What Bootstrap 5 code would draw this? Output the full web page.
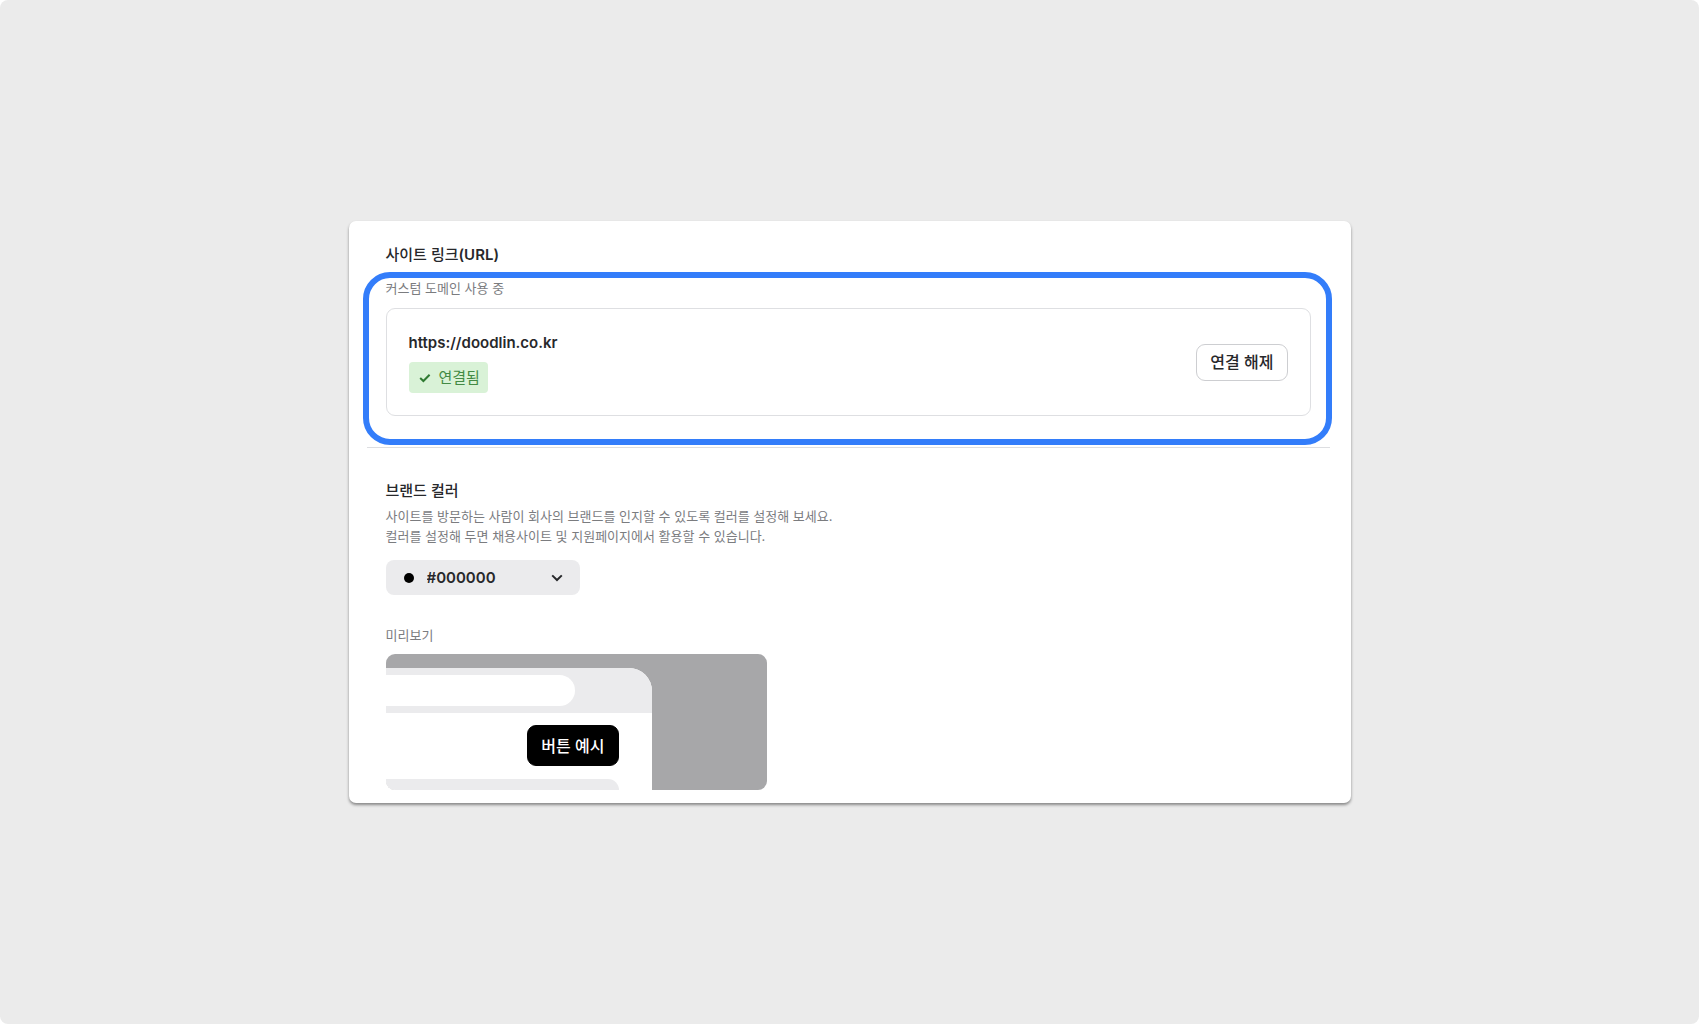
<!DOCTYPE html>
<html lang="ko">
<head>
<meta charset="utf-8">
<meta name="viewport" content="width=device-width, initial-scale=1">
<title>사이트 설정</title>
<link href="https://cdn.jsdelivr.net/npm/bootstrap@5.3.0/dist/css/bootstrap.min.css" rel="stylesheet">
<style>
  html { background: #fff; }
  body {
    background: #fff;
    color: #27282b;
    font-family: Inter, "Noto Sans CJK KR", sans-serif;
    font-size: 15px;
    line-height: 20px;
  }
  .stage { background: #ebebeb; border-radius: 8px; }
  .panel {
    max-width: 1002px;
    padding: 24px 0 13px;
    border-radius: 7px;
    box-shadow: 0 2px 3px rgba(0, 0, 0, .42);
  }
  .block { padding: 0 37px; }
  .heading { font-size: 15px; font-weight: 500; line-height: 20px; margin: 0; }
  .note { font-size: 13px; line-height: 20px; color: #7b7c7f; margin: 0; }
  .heading + .note { margin-top: 5px; }
  .highlight {
    margin: 7px 19px 2px 14px;
    padding: 0 15px 23px 17px;
    border: 6px solid #337dfa;
    border-radius: 27px;
  }
  .domain-box {
    margin-top: 10px;
    padding: 22px;
    border: 1px solid #dedfe2;
    border-radius: 9px;
  }
  .domain-info { gap: 9px; padding-top: 2px; }
  .domain-url { font-weight: 600; color: #27282b; }
  .status {
    height: 31px;
    padding: 0 8px 0 10px;
    gap: 8px;
    border-radius: 4px;
    background: #d9f2d7;
    color: #438a44;
  }
  .btn-line {
    --bs-btn-color: #27282b;
    --bs-btn-border-color: #cdced1;
    --bs-btn-border-radius: 9px;
    --bs-btn-padding-x: 13px;
    --bs-btn-padding-y: 0px;
    --bs-btn-font-size: 16px;
    --bs-btn-font-weight: 500;
    height: 37px;
    white-space: nowrap;
  }
  .rule { height: 1px; margin: 0 21px 33px 18px; background: #dddee1; opacity: 1; border: 0; }
  .color-pick { width: 194px; margin-top: 14px; }
  .color-pick select {
    height: 35px;
    padding: 0 41px;
    border: 0;
    border-radius: 8px;
    background: #ebebed;
    color: #27282b;
    font-size: 15px;
    font-weight: 600;
    appearance: none;
  }
  .color-pick .dot { left: 18px; width: 10px; height: 10px; background: #000; }
  .color-pick svg { right: 17px; }
  .preview-label { margin-top: 30px; }
  .preview { max-width: 381px; height: 136px; margin-top: 9px; padding-top: 14px; background: #a7a7a9; border-radius: 9px; }
  .device { width: 266px; height: 122px; background: #fff; border-radius: 0 23px 0 0; }
  .device-bar { height: 45px; padding: 7px 0; background: #ebebed; }
  .device-pill { width: 189px; height: 31px; background: #fff; border-radius: 0 16px 16px 0; }
  .btn-sample {
    --bs-btn-color: #fff;
    --bs-btn-bg: #000;
    --bs-btn-border-color: #000;
    --bs-btn-border-radius: 9px;
    --bs-btn-padding-x: 13px;
    --bs-btn-padding-y: 0px;
    --bs-btn-font-size: 16px;
    --bs-btn-font-weight: 500;
    height: 41px;
    margin: 12px 33px 13px auto;
  }
  .device-foot { width: 233px; height: 11px; background: #ebebed; border-radius: 0 12px 0 9px; }
</style>
</head>
<body>
<main class="stage min-vh-100 d-flex align-items-center justify-content-center">
  <div class="panel bg-white w-100">
    <section>
      <div class="block"><h2 class="heading">사이트 링크<span class="fw-semibold">(URL)</span></h2></div>
      <div class="highlight">
        <p class="note">커스텀 도메인 사용 중</p>
        <div class="domain-box d-flex align-items-center justify-content-between">
          <div class="domain-info d-flex flex-column align-items-start">
            <a class="domain-url text-decoration-none" href="https://doodlin.co.kr">https://doodlin.co.kr</a>
            <span class="status d-inline-flex align-items-center">
              <svg width="12" height="10" viewBox="0 0 12 10" fill="none" stroke="#2f7a32" stroke-width="2" aria-hidden="true"><path d="M1.2 5l3.2 3L10.6 1.8"/></svg>
              연결됨
            </span>
          </div>
          <button type="button" class="btn btn-line">연결 해제</button>
        </div>
      </div>
    </section>
    <hr class="rule">
    <section class="block">
      <h2 class="heading"><label for="brandColor">브랜드 컬러</label></h2>
      <p class="note">사이트를 방문하는 사람이 회사의 브랜드를 인지할 수 있도록 컬러를 설정해 보세요.<br>컬러를 설정해 두면 채용사이트 및 지원페이지에서 활용할 수 있습니다.</p>
      <div class="color-pick position-relative d-flex align-items-center">
        <select id="brandColor" class="w-100"><option selected>#000000</option></select>
        <span class="dot position-absolute rounded-circle pe-none"></span>
        <svg class="position-absolute pe-none" width="12" height="8" viewBox="0 0 12 8" fill="none" stroke="#27282b" stroke-width="2" aria-hidden="true"><path d="M1.2 1.4L6 6l4.8-4.6"/></svg>
      </div>
      <p class="note preview-label">미리보기</p>
      <div class="preview overflow-hidden">
        <div class="device d-flex flex-column overflow-hidden">
          <div class="device-bar"><div class="device-pill"></div></div>
          <button type="button" class="btn btn-sample">버튼 예시</button>
          <div class="device-foot"></div>
        </div>
      </div>
    </section>
  </div>
</main>
<script src="https://cdn.jsdelivr.net/npm/bootstrap@5.3.0/dist/js/bootstrap.bundle.min.js"></script>
</body>
</html>
